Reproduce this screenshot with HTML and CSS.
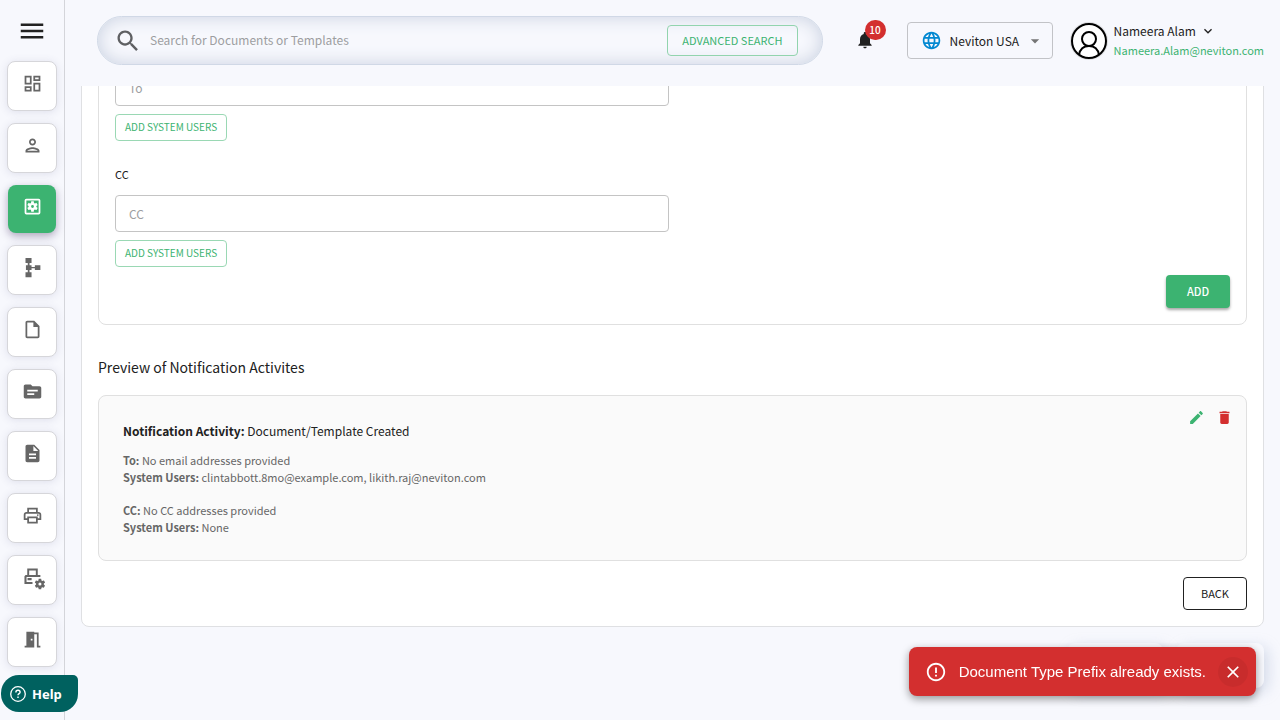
FILE: index.html
```html
<!DOCTYPE html>
<html lang="en">
<head>
<meta charset="utf-8">
<meta name="viewport" content="width=device-width, initial-scale=1">
<title>Notification Activities</title>
<link rel="stylesheet" href="styles.css">
</head>
<body>
<div class="app">
  <nav class="sidebar" aria-label="Main">
    <button class="menu-toggle" type="button" aria-label="Menu"><svg viewBox="0 0 24 24"><path d="M3 18h18v-2H3v2zm0-5h18v-2H3v2zm0-7v2h18V6H3z"/></svg></button>
    <a class="nav-item" href="#" aria-label="Dashboard"><svg viewBox="0 0 24 24"><path d="M19 5v2h-4V5h4M9 5v6H5V5h4m10 8v6h-4v-6h4M9 17v2H5v-2h4M21 3h-8v6h8V3zM11 3H3v10h8V3zm10 8h-8v10h8V11zm-10 4H3v6h8v-6z"/></svg></a>
    <a class="nav-item" href="#" aria-label="Users"><svg viewBox="0 0 24 24"><path d="M12 6c1.1 0 2 .9 2 2s-.9 2-2 2-2-.9-2-2 .9-2 2-2m0 10c2.7 0 5.8 1.29 6 2H6c.23-.72 3.31-2 6-2m0-12C9.79 4 8 5.79 8 8s1.79 4 4 4 4-1.79 4-4-1.79-4-4-4zm0 10c-2.67 0-8 1.34-8 4v2h16v-2c0-2.66-5.33-4-8-4z"/></svg></a>
    <a class="nav-item nav-item-active" href="#" aria-label="Settings" aria-current="page"><svg viewBox="0 0 24 24"><rect x="4" y="4" width="16" height="16" rx="1" fill="none" stroke="currentColor" stroke-width="2"/><path transform="translate(12 12) scale(.62) translate(-12 -12)" d="M19.14 12.94c.04-.3.06-.61.06-.94 0-.32-.02-.64-.07-.94l2.03-1.58c.18-.14.23-.41.12-.61l-1.92-3.32c-.12-.22-.37-.29-.59-.22l-2.39.96c-.5-.38-1.03-.7-1.62-.94l-.36-2.54c-.04-.24-.24-.41-.48-.41h-3.84c-.24 0-.43.17-.47.41l-.36 2.54c-.59.24-1.13.57-1.62.94l-2.39-.96c-.22-.08-.47 0-.59.22L2.74 8.87c-.12.21-.08.47.12.61l2.03 1.58c-.05.3-.09.63-.09.94s.02.64.07.94l-2.03 1.58c-.18.14-.23.41-.12.61l1.92 3.32c.12.22.37.29.59.22l2.39-.96c.5.38 1.03.7 1.62.94l.36 2.54c.05.24.24.41.48.41h3.84c.24 0 .44-.17.47-.41l.36-2.54c.59-.24 1.13-.56 1.62-.94l2.39.96c.22.08.47 0 .59-.22l1.92-3.32c.12-.22.07-.47-.12-.61l-2.01-1.58zM12 14.6a2.6 2.6 0 1 1 0-5.2 2.6 2.6 0 0 1 0 5.2z"/></svg></a>
    <a class="nav-item" href="#" aria-label="Workflow"><svg viewBox="0 0 24 24"><path d="M4 1.200h6.900v5.600H8.600v2.600h2.300v1.900h3.800V9.300H21v5.500h-6.300v-2H10.900v2H8.600v2.500h2.300V23H4v-5.700h2.600v-2.500H4.500V9.400h2.100V6.800H4z"/></svg></a>
    <a class="nav-item" href="#" aria-label="Documents"><svg viewBox="0 0 24 24"><path d="M14 2H6c-1.100 0-1.990.9-1.990 2L4 20c0 1.100.89 2 1.990 2H18c1.100 0 2-.9 2-2V8l-6-6zM6 20V4h7v5h5v11H6z"/></svg></a>
    <a class="nav-item" href="#" aria-label="Topics"><svg viewBox="0 0 24 24"><path d="M20 6h-8l-2-2H4c-1.100 0-1.990.9-1.990 2L2 18c0 1.100.9 2 2 2h16c1.100 0 2-.9 2-2V8c0-1.100-.9-2-2-2zm-6 10H6v-2h8v2zm4-4H6v-2h12v2z"/></svg></a>
    <a class="nav-item" href="#" aria-label="Templates"><svg viewBox="0 0 24 24"><path d="M14 2H6c-1.100 0-1.990.9-1.990 2L4 20c0 1.100.89 2 1.990 2H18c1.100 0 2-.9 2-2V8l-6-6zm2 16H8v-2h8v2zm0-4H8v-2h8v2zm-3-5V3.500L18.500 9H13z"/></svg></a>
    <a class="nav-item" href="#" aria-label="Print"><svg viewBox="0 0 24 24"><path d="M19 8h-1V3H6v5H5c-1.660 0-3 1.340-3 3v6h4v4h12v-4h4v-6c0-1.660-1.340-3-3-3zM8 5h8v3H8V5zm8 12v2H8v-4h8v2zm2-2v-2H6v2H4v-4c0-.55.45-1 1-1h14c.55 0 1 .45 1 1v4h-2z"/><circle cx="18" cy="11.500" r="1"/></svg></a>
    <a class="nav-item" href="#" aria-label="Print settings"><svg viewBox="0 0 24 24"><path d="M6 1.700h12v7.500h3v2.300H5.200v5.700H12v2.300H2.800V10.500l1.300-1.300H6zm2.200 2.200v5.300h7.600V3.900zM6.300 12.600h4.700v2.400H6.300z"/><path transform="translate(20.500 19.500) scale(.62) translate(-12 -12)" d="M19.140 12.940c.04-.3.06-.61.06-.94 0-.32-.02-.64-.07-.94l2.030-1.580c.18-.14.23-.41.12-.61l-1.920-3.320c-.12-.22-.37-.29-.59-.22l-2.390.96c-.5-.38-1.030-.7-1.620-.94l-.36-2.540c-.04-.24-.24-.41-.48-.41h-3.840c-.24 0-.43.17-.47.41l-.36 2.540c-.59.24-1.130.57-1.620.94l-2.390-.96c-.22-.08-.47 0-.59.22L2.740 8.870c-.12.21-.08.47.12.61l2.030 1.580c-.05.3-.09.63-.09.94s.02.64.07.94l-2.030 1.580c-.18.14-.23.41-.12.61l1.920 3.320c.12.22.37.29.59.22l2.390-.96c.5.38 1.030.7 1.620.94l.36 2.540c.05.24.24.41.48.41h3.840c.24 0 .44-.17.47-.41l.36-2.540c.59-.24 1.130-.56 1.620-.94l2.390.96c.22.08.47 0 .59-.22l1.920-3.320c.12-.22.07-.47-.12-.61l-2.010-1.580zM12 14.800a2.800 2.800 0 1 1 0-5.600 2.800 2.800 0 0 1 0 5.600z"/></svg></a>
    <a class="nav-item" href="#" aria-label="Rooms"><svg viewBox="0 0 24 24"><path d="M14 6v15H3v-2h2V3h9v1h5v15h2v2h-4V6h-3zm-4 5v2h2v-2h-2z"/></svg></a>
  </nav>

  <div class="page">
    <header class="topbar">
      <form class="search" role="search">
        <svg class="search-icon" viewBox="0 0 24 24"><path d="M15.500 14h-.79l-.28-.27C15.410 12.590 16 11.110 16 9.500 16 5.910 13.090 3 9.500 3S3 5.910 3 9.500 5.910 16 9.500 16c1.610 0 3.090-.59 4.230-1.570l.27.28v.79l5 4.990L20.490 19l-4.990-5zm-6 0C7.010 14 5 11.990 5 9.500S7.010 5 9.500 5 14 7.010 14 9.500 11.990 14 9.500 14z"/></svg>
        <input class="search-input" type="text" aria-label="Search" placeholder="Search for Documents or Templates">
        <button class="btn btn-advanced" type="button">ADVANCED SEARCH</button>
      </form>
      <button class="bell" type="button" aria-label="Notifications"><svg viewBox="0 0 24 24"><path d="M12 22c1.100 0 2-.9 2-2h-4c0 1.100.89 2 2 2zm6-6v-5c0-3.070-1.640-5.640-4.500-6.320V4c0-.83-.67-1.500-1.500-1.500s-1.500.67-1.500 1.500v.68C7.630 5.360 6 7.920 6 11v5l-2 2v1h16v-1l-2-2z"/></svg><span class="badge">10</span></button>
      <div class="org">
        <svg class="globe" viewBox="0 0 24 24"><path d="M11.990 2C6.470 2 2 6.480 2 12s4.470 10 9.990 10C17.520 22 22 17.520 22 12S17.520 2 11.990 2zm6.930 6h-2.950c-.32-1.250-.78-2.450-1.380-3.560 1.840.63 3.370 1.910 4.330 3.560zM12 4.040c.83 1.200 1.480 2.530 1.910 3.960h-3.820c.43-1.430 1.080-2.760 1.910-3.960zM4.260 14C4.100 13.360 4 12.690 4 12s.1-1.360.26-2h3.380c-.08.66-.14 1.320-.14 2s.06 1.340.14 2H4.260zm.82 2h2.950c.32 1.250.78 2.450 1.380 3.560-1.840-.63-3.370-1.900-4.330-3.560zm2.950-8H5.080c.96-1.660 2.490-2.930 4.330-3.560C8.810 5.550 8.350 6.750 8.030 8zM12 19.960c-.83-1.200-1.480-2.530-1.910-3.960h3.820c-.43 1.430-1.080 2.760-1.910 3.960zM14.340 14H9.660c-.09-.66-.16-1.320-.16-2s.07-1.350.16-2h4.680c.09.65.16 1.320.16 2s-.07 1.340-.16 2zm.25 5.560c.6-1.110 1.060-2.310 1.380-3.560h2.950c-.96 1.650-2.490 2.930-4.330 3.560zM16.360 14c.08-.66.14-1.320.14-2s-.06-1.340-.14-2h3.380c.16.64.26 1.310.26 2s-.1 1.360-.26 2h-3.380z"/></svg>
        <select class="org-select" aria-label="Organization"><option>Neviton USA</option></select>
        <svg class="caret" viewBox="0 0 24 24"><path d="M7 10l5 5 5-5z"/></svg>
      </div>
      <div class="profile">
        <svg class="avatar" viewBox="0 0 38 38"><circle cx="19" cy="19" r="19" fill="#dcdde0"/><circle cx="19" cy="19" r="17" fill="#fff" stroke="#000" stroke-width="2"/><g fill="none" stroke="#000" stroke-width="2"><circle cx="19" cy="17" r="7"/><path d="M9 33c1-6 5-9 10-9s9 3 10 9"/></g></svg>
        <div class="profile-text">
          <button class="profile-name" type="button">Nameera Alam <svg viewBox="0 0 24 24"><path d="M7.410 8.590 12 13.170l4.590-4.580L18 10l-6 6-6-6 1.410-1.410z"/></svg></button>
          <a class="profile-mail" href="#">Nameera.Alam@neviton.com</a>
        </div>
      </div>
    </header>

    <main class="panel">
      <section class="form-box">
        <div class="field">
          <input class="text-input" type="text" aria-label="To" placeholder="To">
          <button class="btn btn-users" type="button">ADD SYSTEM USERS</button>
        </div>
        <div class="field">
          <label class="field-label" for="cc">CC</label>
          <input class="text-input" id="cc" type="text" placeholder="CC">
          <button class="btn btn-users" type="button">ADD SYSTEM USERS</button>
        </div>
        <button class="btn btn-add" type="button">ADD</button>
      </section>
      <h2 class="preview-title">Preview of Notification Activites</h2>
      <article class="activity">
        <div class="activity-text">
          <h3 class="activity-title"><b>Notification Activity:</b> Document/Template Created</h3>
          <p class="recipients"><b>To:</b> No email addresses provided<br><b>System Users:</b> clintabbott.8mo@example.com, likith.raj@neviton.com</p>
          <p class="recipients"><b>CC:</b> No CC addresses provided<br><b>System Users:</b> None</p>
        </div>
        <div class="activity-tools">
          <button class="tool tool-edit" type="button" aria-label="Edit"><svg viewBox="0 0 24 24"><path d="M3 17.250V21h3.750L17.810 9.940l-3.750-3.750L3 17.250zM20.710 7.040c.39-.39.39-1.020 0-1.410l-2.340-2.340c-.39-.39-1.020-.39-1.410 0l-1.830 1.830 3.750 3.750 1.830-1.830z"/></svg></button>
          <button class="tool tool-delete" type="button" aria-label="Delete"><svg viewBox="0 0 24 24"><path d="M6 19c0 1.100.9 2 2 2h8c1.100 0 2-.9 2-2V7H6v12zM19 4h-3.500l-1-1h-5l-1 1H5v2h14V4z"/></svg></button>
        </div>
      </article>
      <button class="btn btn-back" type="button">BACK</button>
    </main>
    <div class="footer-chips" aria-hidden="true"><span class="chip"></span><span class="chip"></span></div>
  </div>
</div>

<button class="help" type="button"><svg viewBox="0 0 16 16" fill="none" stroke="currentColor"><circle cx="8" cy="8" r="7.300" stroke-width="1.300"/><path stroke-width="1.400" d="M5.900 6.400c0-1.300.9-2.100 2.100-2.100s2.100.8 2.100 1.900c0 1.400-2.100 1.500-2.100 3.100M8 10.600v1.400"/></svg>Help</button>

<div class="toast" role="alert">
  <svg class="toast-icon" viewBox="0 0 24 24"><path d="M11 15h2v2h-2zm0-8h2v6h-2zm.99-5C6.470 2 2 6.480 2 12s4.470 10 9.990 10C17.520 22 22 17.520 22 12S17.520 2 11.990 2zM12 20c-4.420 0-8-3.580-8-8s3.580-8 8-8 8 3.580 8 8-3.580 8-8 8z"/></svg>
  <span class="toast-text">Document Type Prefix already exists.</span>
  <button class="toast-close" type="button" aria-label="Close"><svg viewBox="0 0 24 24"><path d="M19 6.410 17.590 5 12 10.590 6.410 5 5 6.410 10.590 12 5 17.590 6.410 19 12 13.410 17.590 19 19 17.590 13.410 12z"/></svg></button>
</div>
</body>
</html>
```
FILE: styles.css
```css
*, *::before, *::after { box-sizing: border-box; }

body {
  margin: 0;
  height: 100vh;
  overflow: hidden;
  background: #f7f8fd;
  color: #212121;
  font-family: "Noto Sans CJK SC", "Noto Sans", sans-serif;
  font-size: 11px;
}

button, input, select { font: inherit; color: inherit; margin: 0; }
button { background: none; border: 0; padding: 0; cursor: pointer; }
svg { display: block; fill: currentColor; flex: none; }
a { text-decoration: none; }

.app { display: flex; height: 100%; }

.sidebar {
  flex: none;
  width: 65px;
  display: flex;
  flex-direction: column;
  align-items: center;
  gap: 12px;
  padding-top: 16px;
  border-right: 1px solid #d4d5da;
}
.menu-toggle { padding-bottom: 3px; }
.menu-toggle svg { width: 30px; height: 30px; }
.nav-item {
  flex: none;
  width: 50px;
  height: 50px;
  display: flex;
  justify-content: center;
  align-items: flex-start;
  padding-top: 11px;
  border: 1px solid #d6d6da;
  border-radius: 8px;
  background: #fff;
  color: #666;
  box-shadow: 0 1px 8px rgba(80, 80, 130, .14);
}
.nav-item svg { width: 21px; height: 21px; overflow: visible; }
.nav-item-active {
  width: 48px;
  height: 48px;
  border: 0;
  background: #3cb371;
  color: #fff;
  box-shadow: 0 3px 8px rgba(60, 40, 90, .4);
}

.page { flex: 1; min-width: 0; }

.topbar {
  position: relative;
  z-index: 1;
  height: 86px;
  display: flex;
  align-items: flex-start;
  padding: 16px 16px 0 32px;
  background: #f7f8fd;
}
.search {
  flex: 1;
  display: flex;
  align-items: center;
  height: 49px;
  padding: 0 24px 0 16px;
  border: 1px solid #d0d8e6;
  border-radius: 25px;
  box-shadow: inset 0 0 18px #c9d1e0;
}
.search-icon { width: 28px; height: 28px; color: #5f6063; }
.search-input {
  flex: 1;
  min-width: 0;
  padding: 0 8px 3px;
  border: 0;
  outline: 0;
  background: none;
  font-size: 12px;
}
::placeholder { color: #9d9ea1; opacity: 1; }

.btn { padding-bottom: 2px; border-radius: 4px; font-weight: 400; white-space: nowrap; }
.btn-advanced { height: 31px; padding: 0 14px 1px; border: 1px solid #92d4ae; color: #3cb371; }

.bell { position: relative; margin: 14px 32px 0; color: #212121; }
.bell svg { width: 20px; height: 20px; }
.badge {
  position: absolute;
  left: 10px;
  bottom: 10px;
  width: 21px;
  height: 20px;
  border-radius: 10px;
  background: #d32f2f;
  color: #fff;
  font-size: 10px;
  font-weight: 500;
  line-height: 20px;
}

.org {
  display: flex;
  align-items: center;
  width: 146px;
  height: 37px;
  margin: 6px 17px 0 0;
  padding: 0 7px 0 13px;
  border: 1px solid #c2c3c7;
  border-radius: 4px;
}
.globe { width: 21px; height: 21px; color: #0288d1; }
.org-select {
  flex: 1;
  min-width: 0;
  margin-left: 8px;
  padding: 0 0 1px;
  border: 0;
  background: none;
  appearance: none;
  font-size: 12px;
}
.caret { width: 20px; height: 20px; color: #757575; }

.profile { display: flex; align-items: flex-start; gap: 6px; padding-top: 5px; }
.avatar { width: 38px; height: 38px; margin-top: 1px; }
.profile-text { display: flex; flex-direction: column; align-items: flex-start; }
.profile-name { display: flex; align-items: center; gap: 4px; font-size: 12px; line-height: 20px; }
.profile-name svg { width: 16px; height: 16px; }
.profile-mail { color: #3cb371; line-height: 18px; }

/* The panel's start is scrolled under the top bar. */
.panel {
  display: flex;
  flex-direction: column;
  margin: -51px 16px 0;
  padding: 16px;
  border: 1px solid #dfe0e3;
  border-radius: 8px;
  background: #fff;
}
.form-box {
  display: flex;
  flex-direction: column;
  padding: 16px;
  border: 1px solid #e0e0e0;
  border-radius: 8px;
}
.field { display: flex; flex-direction: column; align-items: flex-start; gap: 8px; }
.field + .field { margin-top: 25px; }
.field-label { height: 21px; line-height: 17px; }
.text-input {
  width: calc(50% - 4px);
  height: 37px;
  padding: 0 13px 1px;
  border: 1px solid #c4c4c4;
  border-radius: 4px;
  background: #fff;
  font-size: 12px;
}
.btn-users { height: 27px; padding: 0 9px 2px; border: 1px solid #9ad8b4; color: #3cb371; font-size: 10px; }
.btn-add {
  align-self: flex-end;
  width: 64px;
  height: 33px;
  margin-top: 8px;
  background: #3cb371;
  color: #fff;
  font-weight: 500;
  box-shadow: 0 2px 3px rgba(0, 0, 0, .35);
}
.preview-title { margin: 30px 0 16px; font-size: 14px; font-weight: 400; line-height: 24px; }

.activity {
  display: flex;
  justify-content: space-between;
  align-items: flex-start;
  padding: 24px;
  border: 1px solid #e0e0e0;
  border-radius: 8px;
  background: #fafafa;
}
.activity-title { margin: 0 0 10px; font-size: 12px; font-weight: 400; line-height: 22px; }
.recipients { margin: 0; color: #666; line-height: 17px; }
.recipients + .recipients { margin-top: 16px; }
.activity-tools { display: flex; gap: 11px; margin: -11px -11px 0 0; }
.tool svg { width: 17px; height: 17px; }
.tool-edit { color: #3cb371; }
.tool-delete { color: #d32f2f; }
.btn-back { align-self: flex-end; width: 64px; height: 33px; margin-top: 16px; border: 1px solid #212121; }

.footer-chips { display: flex; justify-content: flex-end; gap: 13px; padding: 16px 16px 0; }
.chip {
  width: 96px;
  height: 45px;
  border-radius: 8px;
  background: #f7f8fd;
  box-shadow: 4px 4px 14px rgba(163, 177, 208, .4);
}
.chip + .chip { width: 88px; }

.help {
  position: fixed;
  left: 1px;
  bottom: 8px;
  display: flex;
  align-items: center;
  gap: 6px;
  height: 37px;
  padding: 0 16px 0 9px;
  border-radius: 18px 5px 18px 18px;
  background: #00615f;
  color: #fff;
  font-family: "Noto Sans", sans-serif;
  font-size: 13px;
  font-weight: 700;
}
.help svg { width: 16px; height: 16px; fill: none; }

.toast {
  position: fixed;
  z-index: 2;
  right: 24px;
  bottom: 24px;
  display: flex;
  align-items: center;
  height: 49px;
  padding: 0 8px 0 16px;
  border-radius: 8px;
  background: #d32f2f;
  color: #fff;
  font-family: "Liberation Sans", Arial, sans-serif;
  font-size: 15px;
  box-shadow: 0 3px 8px rgba(0, 0, 0, .4);
}
.toast-icon { width: 22px; height: 22px; margin-right: 12px; }
.toast-close {
  display: grid;
  place-items: center;
  width: 30px;
  height: 30px;
  margin-left: 12px;
  border-radius: 50%;
  background: rgba(0, 0, 0, .05);
}
.toast-close svg { width: 20px; height: 20px; }
```
